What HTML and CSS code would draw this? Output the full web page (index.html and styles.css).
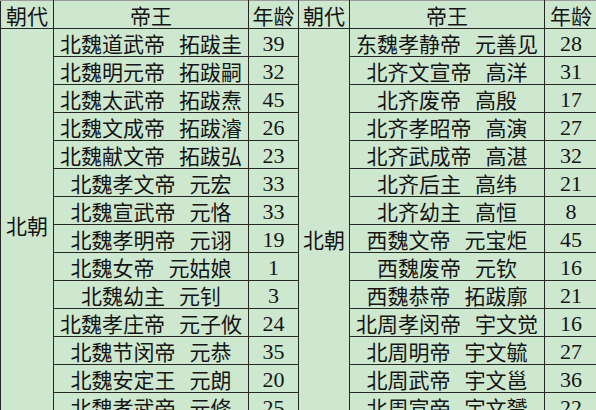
FILE: index.html
```html
<!DOCTYPE html>
<html lang="zh">
<head>
<meta charset="utf-8">
<title>北朝帝王年龄</title>
<link rel="stylesheet" href="styles.css">
</head>
<body>
<table class="sheet">
  <colgroup>
    <col class="c-dyn"><col class="c-name"><col class="c-age">
    <col class="c-dyn2"><col class="c-name"><col class="c-age2">
  </colgroup>
  <thead>
    <tr><th>朝代</th><th>帝王</th><th>年龄</th><th>朝代</th><th>帝王</th><th>年龄</th></tr>
  </thead>
  <tbody>
    <tr><td rowspan="14" class="dyn">北朝</td><td>北魏道武帝&ensp;&#8198;拓跋圭</td><td class="num">39</td><td rowspan="15" class="dyn">北朝</td><td>东魏孝静帝&ensp;&#8198;元善见</td><td class="num">28</td></tr>
    <tr><td>北魏明元帝&ensp;&#8198;拓跋嗣</td><td class="num">32</td><td>北齐文宣帝&ensp;&#8198;高洋</td><td class="num">31</td></tr>
    <tr><td>北魏太武帝&ensp;&#8198;拓跋焘</td><td class="num">45</td><td>北齐废帝&ensp;&#8198;高殷</td><td class="num">17</td></tr>
    <tr><td>北魏文成帝&ensp;&#8198;拓跋濬</td><td class="num">26</td><td>北齐孝昭帝&ensp;&#8198;高演</td><td class="num">27</td></tr>
    <tr><td>北魏献文帝&ensp;&#8198;拓跋弘</td><td class="num">23</td><td>北齐武成帝&ensp;&#8198;高湛</td><td class="num">32</td></tr>
    <tr><td>北魏孝文帝&ensp;&#8198;元宏</td><td class="num">33</td><td>北齐后主&ensp;&#8198;高纬</td><td class="num">21</td></tr>
    <tr><td>北魏宣武帝&ensp;&#8198;元恪</td><td class="num">33</td><td>北齐幼主&ensp;&#8198;高恒</td><td class="num">8</td></tr>
    <tr><td>北魏孝明帝&ensp;&#8198;元诩</td><td class="num">19</td><td>西魏文帝&ensp;&#8198;元宝炬</td><td class="num">45</td></tr>
    <tr><td>北魏女帝&ensp;&#8198;元姑娘</td><td class="num">1</td><td>西魏废帝&ensp;&#8198;元钦</td><td class="num">16</td></tr>
    <tr><td>北魏幼主&ensp;&#8198;元钊</td><td class="num">3</td><td>西魏恭帝&ensp;&#8198;拓跋廓</td><td class="num">21</td></tr>
    <tr><td>北魏孝庄帝&ensp;&#8198;元子攸</td><td class="num">24</td><td>北周孝闵帝&ensp;&#8198;宇文觉</td><td class="num">16</td></tr>
    <tr><td>北魏节闵帝&ensp;&#8198;元恭</td><td class="num">35</td><td>北周明帝&ensp;&#8198;宇文毓</td><td class="num">27</td></tr>
    <tr><td>北魏安定王&ensp;&#8198;元朗</td><td class="num">20</td><td>北周武帝&ensp;&#8198;宇文邕</td><td class="num">36</td></tr>
    <tr><td>北魏孝武帝&ensp;&#8198;元修</td><td class="num">25</td><td>北周宣帝&ensp;&#8198;宇文赟</td><td class="num">22</td></tr>
    <tr><td></td><td></td><td class="num"></td><td>北周静帝&ensp;&#8198;宇文阐</td><td class="num">9</td></tr>
  </tbody>
</table>
</body>
</html>
```
FILE: styles.css
```css
html, body {
  margin: 0;
  padding: 0;
  background: #cde8cf;
  overflow: hidden;
}

.sheet {
  border-collapse: collapse;
  table-layout: fixed;
  width: 597px;
  background: #cde8cf;
  color: #151515;
  font-family: "Noto Sans CJK SC", "Liberation Serif", serif;
  font-size: 21px;
  border-top: 1px solid #9a9a9a;
}

.c-dyn { width: 53px; }
.c-name { width: 195px; }
.c-age { width: 50px; }
.c-dyn2 { width: 51px; }
.c-age2 { width: 53px; }

.sheet th,
.sheet td {
  height: 25px;
  padding: 2px 0 0;
  border: 1px solid #262626;
  text-align: center;
  vertical-align: middle;
  font-weight: normal;
  line-height: 25px;
  white-space: nowrap;
  overflow: hidden;
}

.sheet thead th {
  border-top-color: #9a9a9a;
}

.sheet .num {
  font-family: "Liberation Serif", serif;
  font-size: 22px;
}
```
